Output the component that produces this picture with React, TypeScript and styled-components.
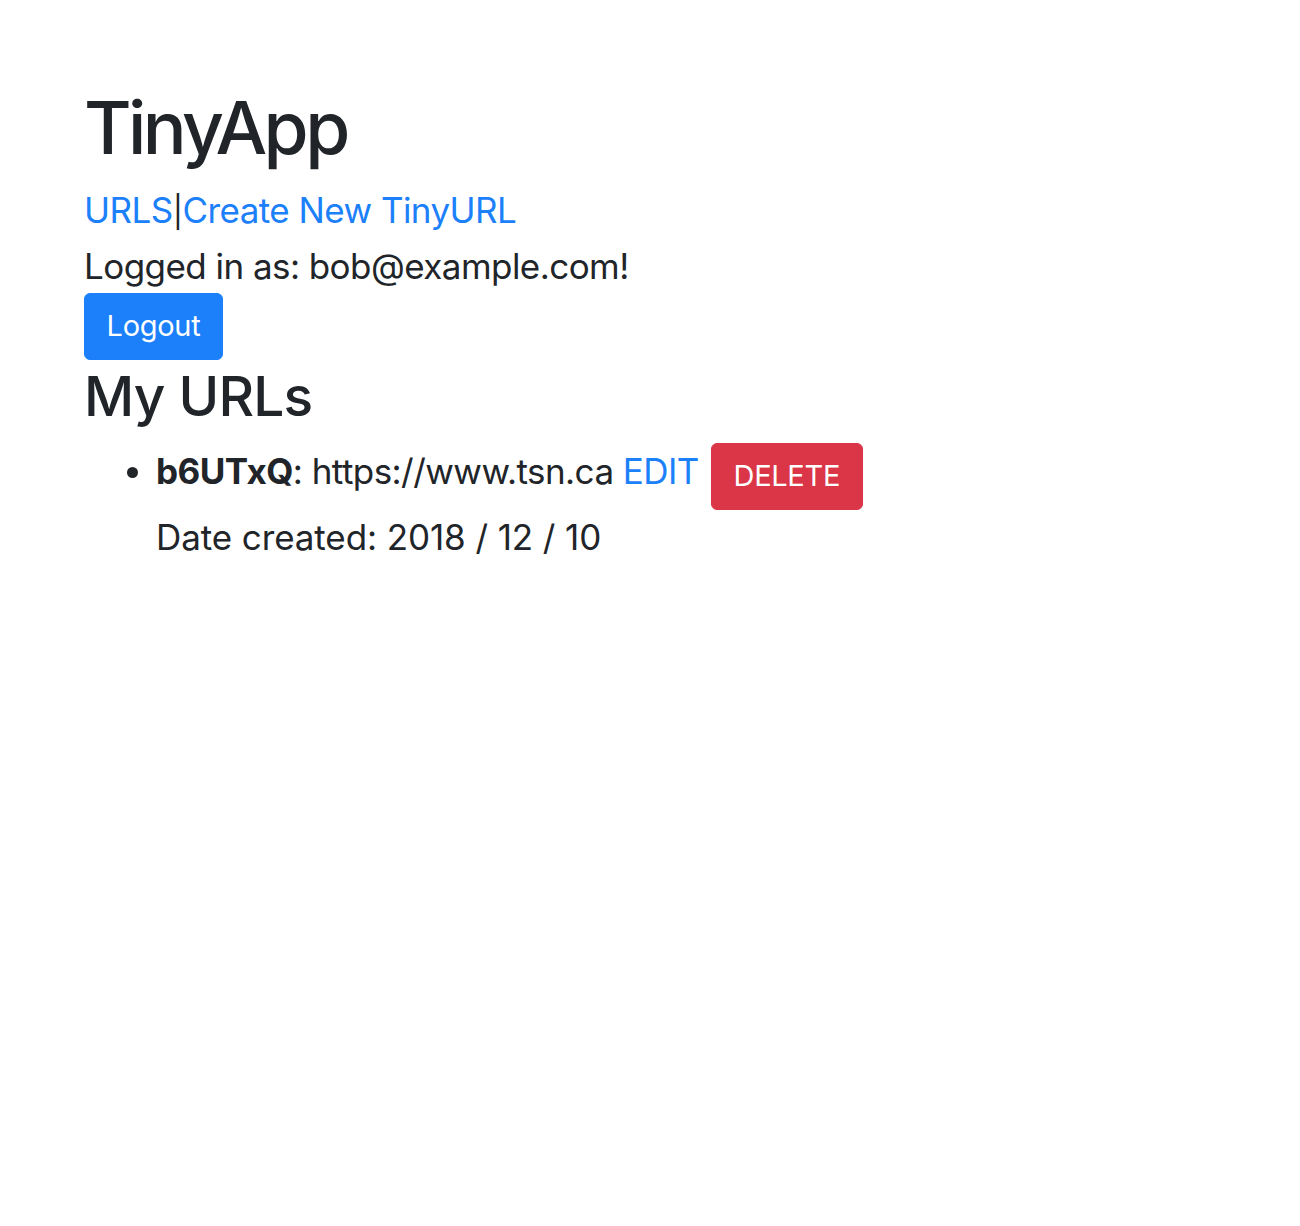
import React from 'react';
import styled, { createGlobalStyle } from 'styled-components';

const GlobalStyle = createGlobalStyle`
  html, body {
    margin: 0;
    padding: 0;
    background: #ffffff;
  }
  body {
    font-family: Inter, "Open Sans", "Liberation Sans", sans-serif;
    font-size: 35px;
    line-height: 54px;
    letter-spacing: -0.55px;
    color: #212529;
  }
`;

const Page = styled.div`
  padding: 84px 84px 0 84px;
`;

const Title = styled.h1`
  margin: 0 0 11px 0;
  font-size: 73px;
  font-weight: 500;
  line-height: 1.2;
  letter-spacing: -3.6px;
`;

const Nav = styled.div`
  display: block;
`;

const NavLink = styled.a`
  color: #1b80fa;
  text-decoration: none;
`;

const Pipe = styled.span`
  font-size: 31px;
`;

const Line = styled.div`
  display: block;
`;

const Button = styled.button<{ $variant: 'primary' | 'danger' }>`
  font-family: inherit;
  font-size: 29px;
  font-weight: 400;
  line-height: 1.5;
  letter-spacing: -0.3px;
  padding: 10.8px 21.6px;
  border: 1px solid ${({ $variant }) => ($variant === 'danger' ? '#da3648' : '#1b80fa')};
  background: ${({ $variant }) => ($variant === 'danger' ? '#da3648' : '#1b80fa')};
  color: #ffffff;
  border-radius: 6px;
  cursor: pointer;
`;

const LogoutForm = styled.form`
  margin: 0 0 3px 0;
`;

const Subtitle = styled.h2`
  margin: 0 0 14px 0;
  font-size: 55px;
  font-weight: 500;
  line-height: 1.2;
  letter-spacing: -0.8px;
`;

const UrlList = styled.ul`
  margin: 0;
  padding-left: 72px;
`;

const UrlItem = styled.li`
  &::marker {
    font-size: 35px;
  }
`;

const InlineForm = styled.form`
  display: inline-block;
  margin: 0 0 0 12px;
  vertical-align: -3px;
`;

const DateLine = styled.p`
  margin: 0;
  letter-spacing: -0.1px;
`;

type UrlEntry = {
  id: string;
  longUrl: string;
  created: string;
};

const urls: UrlEntry[] = [{ id: 'b6UTxQ', longUrl: 'https://www.tsn.ca', created: '2018 / 12 / 10' }];

export default function App() {
  return (
    <>
      <GlobalStyle />
      <Page>
        <Title>TinyApp</Title>
        <Nav>
          <NavLink href="#">URLS</NavLink>
          <Pipe>|</Pipe>
          <NavLink href="#">Create New TinyURL</NavLink>
        </Nav>
        <Line>Logged in as: bob@example.com!</Line>
        <LogoutForm onSubmit={(e) => e.preventDefault()}>
          <Button $variant="primary" type="submit">Logout</Button>
        </LogoutForm>
        <Subtitle>My URLs</Subtitle>
        <UrlList>
          {urls.map((u) => (
            <UrlItem key={u.id}>
              <strong>{u.id}</strong>: {u.longUrl} <NavLink href="#">EDIT</NavLink>
              <InlineForm onSubmit={(e) => e.preventDefault()}>
                <Button $variant="danger" type="submit">DELETE</Button>
              </InlineForm>
              <DateLine>Date created: {u.created}</DateLine>
            </UrlItem>
          ))}
        </UrlList>
      </Page>
    </>
  );
}
